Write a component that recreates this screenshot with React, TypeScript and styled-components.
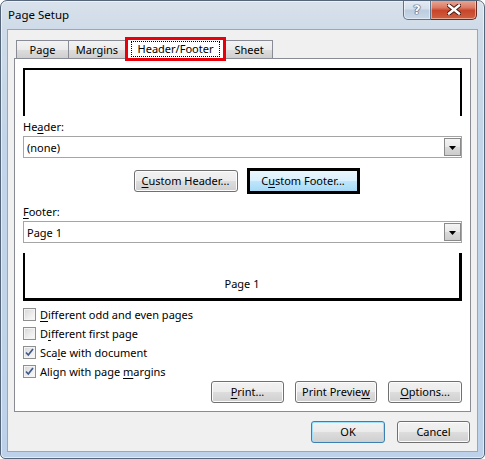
import React from 'react';
import styled, { createGlobalStyle } from 'styled-components';

const GlobalStyle = createGlobalStyle`
  html, body {
    margin: 0;
    padding: 0;
    background: #ffffff;
  }
  body {
    font-family: 'Segoe UI', 'Noto Sans', sans-serif;
    font-size: 11px;
    color: #000;
  }
`;

const Window = styled.div`
  width: 485px;
  height: 459px;
  box-sizing: border-box;
  display: flex;
  flex-direction: column;
  border: 1px solid #55667a;
  border-radius: 7px 7px 5px 5px;
  background: linear-gradient(
    180deg,
    #d9e2ec 0%,
    #cfdbe8 6%,
    #c3d5e9 30%,
    #bdd2ea 100%
  );
  box-shadow: inset 0 0 0 1px rgba(255, 255, 255, 0.55);
  overflow: hidden;
`;

const TitleBar = styled.div`
  height: 28px;
  display: flex;
  align-items: flex-start;
  padding-left: 7px;
  flex-shrink: 0;
`;

const TitleText = styled.div`
  margin-top: 6px;
  line-height: 16px;
  font-size: 11.5px;
  color: #000;
`;

const CaptionButtons = styled.div`
  margin-left: auto;
  margin-right: 7px;
  margin-top: -1px;
  display: flex;
`;

const CaptionButton = styled.div<{ $close?: boolean }>`
  width: ${(p) => (p.$close ? 46 : 28)}px;
  height: 20px;
  box-sizing: border-box;
  display: flex;
  align-items: center;
  justify-content: center;
  border: 1px solid ${(p) => (p.$close ? '#6b2a20' : '#60738a')};
  border-top: none;
  border-left: ${(p) => (p.$close ? 'none' : undefined)};
  border-radius: ${(p) => (p.$close ? '0 0 5px 0' : '0 0 0 5px')};
  background: ${(p) =>
    p.$close
      ? 'linear-gradient(180deg, #e9ab9c 0%, #dc7a64 40%, #c8452b 55%, #d0603f 100%)'
      : 'linear-gradient(180deg, #e6edf5 0%, #d3dfeb 45%, #bccde0 55%, #c9d8e8 100%)'};
  box-shadow: inset 0 0 0 1px rgba(255, 255, 255, 0.45);
`;

const HelpGlyph = styled.span`
  font-family: 'DejaVu Sans', sans-serif;
  font-weight: bold;
  font-size: 13px;
  line-height: 13px;
  color: #fff;
  text-shadow: 0 0 1px #2b3a4e, 0 0 1px #2b3a4e, 0 0 1px #2b3a4e;
`;

const Client = styled.div`
  flex: 1;
  margin: 0 6px 6px 6px;
  background: #f0f0f0;
  border: 1px solid #97a8bc;
  display: flex;
  flex-direction: column;
  padding: 7px 6px 0 6px;
`;

const TabRow = styled.div`
  display: flex;
  align-items: flex-end;
  height: 21px;
  padding-left: 2px;
  position: relative;
  z-index: 2;
`;

const Tab = styled.div<{ $w: number; $active?: boolean }>`
  width: ${(p) => p.$w}px;
  height: ${(p) => (p.$active ? 24 : 18)}px;
  margin-right: -1px;
  margin-bottom: ${(p) => (p.$active ? -3 : 0)}px;
  box-sizing: border-box;
  display: flex;
  align-items: center;
  justify-content: center;
  border: ${(p) => (p.$active ? '3px solid #e8000b' : '1px solid #898c95')};
  border-bottom: ${(p) => (p.$active ? '3px solid #e8000b' : 'none')};
  background: ${(p) =>
    p.$active ? '#ffffff' : 'linear-gradient(180deg, #f3f3f3 0%, #ebebeb 50%, #dddddd 51%, #cfcfcf 100%)'};
  line-height: 16px;
  position: relative;
  z-index: ${(p) => (p.$active ? 3 : 1)};
`;

const FocusRect = styled.span`
  border: 1px dotted #000;
  padding: 0 6px;
  line-height: 14px;
`;

const Panel = styled.div`
  background: #fff;
  border: 1px solid #898c95;
  padding: 0 8px 8px 8px;
  display: flex;
  flex-direction: column;
  position: relative;
  z-index: 1;
`;

const Preview = styled.div<{ $footer?: boolean }>`
  height: 48px;
  box-sizing: border-box;
  margin-top: ${(p) => (p.$footer ? 10 : 9)}px;
  border-left: 2px solid #000;
  border-right: ${(p) => (p.$footer ? 3 : 2)}px solid #000;
  border-top: ${(p) => (p.$footer ? 'none' : '2px solid #000')};
  border-bottom: ${(p) => (p.$footer ? '3px solid #000' : 'none')};
  display: flex;
  align-items: flex-end;
  justify-content: center;
  padding-bottom: 7px;
`;

const Label = styled.div<{ $top: number }>`
  margin-top: ${(p) => p.$top}px;
  line-height: 16px;
`;

const Key = styled.u`
  text-decoration: underline;
  text-underline-offset: 2px;
`;

const Combo = styled.div`
  margin-top: 1px;
  height: 22px;
  box-sizing: border-box;
  border: 1px solid #a5a5a5;
  display: flex;
  align-items: stretch;
  background: #fff;
`;

const ComboText = styled.div`
  flex: 1;
  padding-left: 3px;
  display: flex;
  align-items: center;
`;

const ComboArrow = styled.div`
  width: 17px;
  margin: 1px 0 1px 0;
  box-sizing: border-box;
  border: 1px solid #8a8a8a;
  background: linear-gradient(180deg, #f4f4f4 0%, #e8e8e8 50%, #d9d9d9 51%, #cdcdcd 100%);
  display: flex;
  align-items: center;
  justify-content: center;
`;

const ButtonRow = styled.div<{ $top: number; $align: string }>`
  margin-top: ${(p) => p.$top}px;
  display: flex;
  align-items: center;
  justify-content: ${(p) => p.$align};
  gap: 11px;
`;

const CenteredButtons = styled(ButtonRow)`
  gap: 9px;
  padding-left: 8px;
`;

const Button = styled.div<{ $w: number; $variant?: 'hot' | 'default' }>`
  width: ${(p) => p.$w}px;
  height: ${(p) => (p.$variant === 'hot' ? 26 : 22)}px;
  box-sizing: border-box;
  display: flex;
  align-items: center;
  justify-content: center;
  border: ${(p) =>
    p.$variant === 'hot' ? '3px solid #000' : p.$variant === 'default' ? '1px solid #3c7fb1' : '1px solid #707070'};
  border-radius: ${(p) => (p.$variant === 'hot' ? 0 : 3)}px;
  background: ${(p) =>
    p.$variant === 'hot'
      ? 'linear-gradient(180deg, #eaf6fd 0%, #d9f0fc 50%, #bee6fd 51%, #a7d9f5 100%)'
      : 'linear-gradient(180deg, #f2f2f2 0%, #ebebeb 50%, #dddddd 51%, #cfcfcf 100%)'};
  box-shadow: ${(p) =>
    p.$variant === 'default'
      ? 'inset 0 0 0 1px #9ee0fb'
      : p.$variant === 'hot'
        ? 'none'
        : 'inset 0 0 0 1px #fcfcfc'};
  line-height: 16px;
`;

const Checks = styled.div`
  margin-top: 4px;
  display: flex;
  flex-direction: column;
`;

const CheckRow = styled.div`
  height: 19px;
  display: flex;
  align-items: center;
  gap: 4px;
`;

const Box = styled.div`
  width: 13px;
  height: 13px;
  box-sizing: border-box;
  border: 1px solid #8e8f8f;
  background: linear-gradient(135deg, #d6d6d6 0%, #eeeeee 60%, #fbfbfb 100%);
  box-shadow: inset 0 0 0 1px #f4f4f4;
  display: flex;
  align-items: center;
  justify-content: center;
`;

const DialogButtons = styled(ButtonRow)`
  gap: 12px;
  padding-right: 1px;
`;

const CloseIcon = () => (
  <svg width="14" height="11" viewBox="0 0 14 11">
    <path d="M2 1.5 L12 9.5 M12 1.5 L2 9.5" stroke="#4a1b12" strokeWidth="4.4" strokeLinecap="square" />
    <path d="M2 1.5 L12 9.5 M12 1.5 L2 9.5" stroke="#ffffff" strokeWidth="2.4" strokeLinecap="square" />
  </svg>
);

const Arrow = () => (
  <svg width="7" height="4" viewBox="0 0 7 4" style={{ marginTop: 2 }}>
    <polygon points="0,0 7,0 3.5,4" fill="#000" />
  </svg>
);

const Check = () => (
  <svg width="11" height="11" viewBox="0 0 11 11">
    <path d="M2 5.5 L4.3 8 L9 2" fill="none" stroke="#3e5a8c" strokeWidth="1.7" />
  </svg>
);

const checks: { label: React.ReactNode; on: boolean }[] = [
  { label: <><Key>D</Key>ifferent odd and even pages</>, on: false },
  { label: <>D<Key>i</Key>fferent first page</>, on: false },
  { label: <>Sca<Key>l</Key>e with document</>, on: true },
  { label: <>Align with page <Key>m</Key>argins</>, on: true },
];

export default function App() {
  return (
    <>
      <GlobalStyle />
      <Window>
        <TitleBar>
          <TitleText>Page Setup</TitleText>
          <CaptionButtons>
            <CaptionButton>
              <HelpGlyph>?</HelpGlyph>
            </CaptionButton>
            <CaptionButton $close>
              <CloseIcon />
            </CaptionButton>
          </CaptionButtons>
        </TitleBar>
        <Client>
          <TabRow>
            <Tab $w={53}>Page</Tab>
            <Tab $w={58}>Margins</Tab>
            <Tab $w={101} $active>
              <FocusRect>Header/Footer</FocusRect>
            </Tab>
            <Tab $w={48}>Sheet</Tab>
          </TabRow>
          <Panel>
            <Preview />
            <Label $top={3}>
              He<Key>a</Key>der:
            </Label>
            <Combo>
              <ComboText>(none)</ComboText>
              <ComboArrow>
                <Arrow />
              </ComboArrow>
            </Combo>
            <CenteredButtons $top={10} $align="center">
              <Button $w={104}>
                <Key>C</Key>ustom Header...
              </Button>
              <Button $w={113} $variant="hot">
                C<Key>u</Key>stom Footer...
              </Button>
            </CenteredButtons>
            <Label $top={10}>
              <Key>F</Key>ooter:
            </Label>
            <Combo>
              <ComboText>Page 1</ComboText>
              <ComboArrow>
                <Arrow />
              </ComboArrow>
            </Combo>
            <Preview $footer>Page 1</Preview>
            <Checks>
              {checks.map((c, i) => (
                <CheckRow key={i}>
                  <Box>{c.on && <Check />}</Box>
                  <span>{c.label}</span>
                </CheckRow>
              ))}
            </Checks>
            <ButtonRow $top={0} $align="flex-end">
              <Button $w={73}>
                <Key>P</Key>rint...
              </Button>
              <Button $w={82}>
                Print Previe<Key>w</Key>
              </Button>
              <Button $w={74}>
                <Key>O</Key>ptions...
              </Button>
            </ButtonRow>
          </Panel>
          <DialogButtons $top={9} $align="flex-end">
            <Button $w={74} $variant="default">
              OK
            </Button>
            <Button $w={73}>Cancel</Button>
          </DialogButtons>
        </Client>
      </Window>
    </>
  );
}
